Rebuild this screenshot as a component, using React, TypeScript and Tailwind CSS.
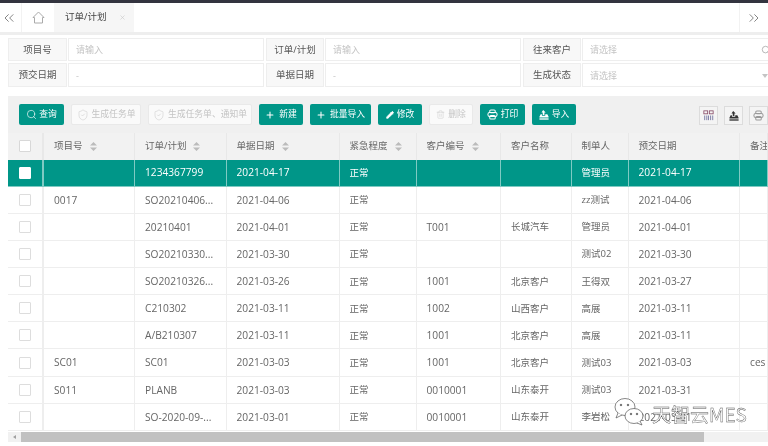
import React from 'react';
import { ChevronsLeft, ChevronsRight, Plus, Search, ShieldCheck, Pencil, Trash2, X } from 'lucide-react';

const font = '[font-family:"Open_Sans","Noto_Sans_CJK_SC",sans-serif]';

const columns = [
  { title: '项目号', sort: true },
  { title: '订单/计划', sort: true },
  { title: '单据日期', sort: true },
  { title: '紧急程度', sort: true },
  { title: '客户编号', sort: true },
  { title: '客户名称', sort: false },
  { title: '制单人', sort: false },
  { title: '预交日期', sort: false },
  { title: '备注', sort: false },
];

const rows = [
  ['', '1234367799', '2021-04-17', '正常', '', '', '管理员', '2021-04-17', ''],
  ['0017', 'SO20210406...', '2021-04-06', '正常', '', '', 'zz测试', '2021-04-06', ''],
  ['', '20210401', '2021-04-01', '正常', 'T001', '长城汽车', '管理员', '2021-04-01', ''],
  ['', 'SO20210330...', '2021-03-30', '正常', '', '', '测试02', '2021-03-30', ''],
  ['', 'SO20210326...', '2021-03-26', '正常', '1001', '北京客户', '王得双', '2021-03-27', ''],
  ['', 'C210302', '2021-03-11', '正常', '1002', '山西客户', '高展', '2021-03-11', ''],
  ['', 'A/B210307', '2021-03-11', '正常', '1001', '北京客户', '高展', '2021-03-11', ''],
  ['SC01', 'SC01', '2021-03-03', '正常', '1001', '北京客户', '测试03', '2021-03-03', 'ces'],
  ['S011', 'PLANB', '2021-03-03', '正常', '0010001', '山东泰开', '测试03', '2021-03-31', ''],
  ['', 'SO-2020-09-...', '2021-03-01', '正常', '0010001', '山东泰开', '李岩松', '2021-03-01', ''],
];

const gridCols = 'grid grid-cols-[36px_91px_91.5px_113px_77px_84.5px_70.5px_57px_111.5px_28px]';

const HomeIcon = () => (
  <svg width="13" height="13" viewBox="0 0 13 13" fill="none" stroke="#aaa" strokeWidth="1">
    <path d="M1 6.5 L6.5 1 L12 6.5 H10.5 V12 H2.5 V6.5 Z" />
  </svg>
);

const SortIcon = () => (
  <svg width="7" height="9" viewBox="0 0 7 9" fill="#bbb" className="ml-[7px] shrink-0">
    <path d="M3.5 0 L7 3.5 H0 Z M0 5.5 H7 L3.5 9 Z" />
  </svg>
);

const ImportIcon = ({ color }: { color: string }) => (
  <svg width="10" height="10" viewBox="0 0 12 12" fill={color}>
    <path d="M5 0 L8 3 H6.5 V6 H4.5 V3 H3 Z" />
    <path d="M2 5 H3.5 V7 H7.5 V5 H10 L11.5 8 V9 H0.5 V8 Z" />
    <rect x="0.5" y="10" width="11" height="1.6" />
  </svg>
);

const PrintIcon = ({ color }: { color: string }) => (
  <svg width="11" height="11" viewBox="0 0 12 12" fill="none" stroke={color} strokeWidth="1.1">
    <rect x="3" y="1" width="6" height="3" rx="1.2" />
    <rect x="1" y="3.8" width="10" height="4.4" rx="2" />
    <rect x="3" y="7" width="6" height="4" rx="1.2" />
  </svg>
);

const ColumnsIcon = () => (
  <svg width="11" height="11" viewBox="0 0 13 13" fill="none" stroke="#8a4f6a" strokeWidth="1">
    <rect x="1" y="1" width="4.5" height="3.5" />
    <rect x="7.5" y="1" width="4.5" height="3.5" />
    <path d="M2 6.5 V12 M4.5 6.5 V12 M6.5 6.5 V12 M9 6.5 V12 M11.5 6.5 V12" stroke="#6b6b9a" />
  </svg>
);

const FilterCell = ({ label, placeholder, labelWidth = 'w-[58px]', width, children }: { label: string; placeholder: string; labelWidth?: string; width: string; children?: React.ReactNode }) => (
  <div className="flex h-full">
    <div className={`${labelWidth} shrink-0 flex items-center justify-center pt-px bg-[#f8f8f8] border border-[#eeeeee] text-[9.5px] text-[#555]`}>
      {label}
    </div>
    <div className={`${width} ml-px flex items-center justify-between pl-[7px] pt-px border border-[#eeeeee] bg-white text-[9px] text-[#c4c4c4]`}>
      <span>{placeholder}</span>
      {children}
    </div>
  </div>
);

const Btn = ({ width, disabled, gap = 'gap-[3px]', icon, children }: { width: string; disabled?: boolean; gap?: string; icon: React.ReactNode; children: string }) => (
  <button
    className={`${width} ${gap} h-[21px] shrink-0 flex items-center justify-center rounded-[2px] text-[8.8px] ${
      disabled ? 'bg-[#fafafa] border border-[#e9e9e9] text-[#c4c4c4]' : 'bg-[#009688] text-white'
    }`}
  >
    {icon}
    {children}
  </button>
);

const IconBtn = ({ children }: { children: React.ReactNode }) => (
  <div className="w-[19px] h-[19px] shrink-0 flex items-center justify-center bg-[#f4f4f4] border border-[#dcdcdc]">
    {children}
  </div>
);

export default function App() {
  return (
    <div className={`${font} relative w-[768px] h-[446px] overflow-hidden bg-white blur-[0.35px]`}>
      <div className="h-[3px] bg-[#33343f]" />

      {/* tab bar */}
      <div className="h-[29px] flex bg-white">
        <div className="w-[22px] pr-[4px] flex items-center justify-center border-r border-[#f2f2f2]">
          <ChevronsLeft size={16} strokeWidth={1.2} color="#666" />
        </div>
        <div className="w-[32px] flex items-center justify-center">
          <HomeIcon />
        </div>
        <div className="w-[80px] flex items-center pl-[11px] bg-[#f6f6f6] text-[9.5px] text-[#444]">
          订单/计划
          <X size={7} color="#c8c8c8" className="ml-[13px]" />
        </div>
        <div className="ml-auto w-[28px] mr-px flex items-center justify-center border-l border-[#f2f2f2]">
          <ChevronsRight size={16} strokeWidth={1.2} color="#666" />
        </div>
      </div>
      <div className="h-[3px] bg-[#eeeeee]" />

      {/* filters */}
      <div className="pl-[8px] pt-[3px] h-[58px] flex flex-col gap-[2px]">
        <div className="h-[23px] flex gap-[2px]">
          <FilterCell label="项目号" placeholder="请输入" labelWidth="w-[59px]" width="w-[196px]" />
          <FilterCell label="订单/计划" placeholder="请输入" width="w-[196px]" />
          <FilterCell label="往来客户" placeholder="请选择" width="w-[188px]">
            <Search size={10} strokeWidth={1.4} color="#888" className="mr-[-2px]" />
          </FilterCell>
        </div>
        <div className="h-[24px] flex gap-[2px]">
          <FilterCell label="预交日期" placeholder="-" labelWidth="w-[59px]" width="w-[196px]" />
          <FilterCell label="单据日期" placeholder="-" width="w-[196px]" />
          <FilterCell label="生成状态" placeholder="请选择" width="w-[188px]">
            <div className="mr-[1px] w-0 h-0 border-x-[3px] border-x-transparent border-t-[4px] border-t-[#c4c4c4]" />
          </FilterCell>
        </div>
      </div>

      {/* toolbar + table */}
      <div className="ml-[8px] mt-[3px]">
        <div className="h-[37px] pl-[11px] pt-[8px] flex gap-[7px] bg-[#f0f0f0]">
          <Btn width="w-[45px]" gap="gap-[2px]" icon={<Search size={11} strokeWidth={1.4} />}>查询</Btn>
          <Btn width="w-[70px]" disabled icon={<ShieldCheck size={12} strokeWidth={1} />}>生成任务单</Btn>
          <Btn width="w-[104px]" disabled icon={<ShieldCheck size={12} strokeWidth={1} />}>生成任务单、通知单</Btn>
          <Btn width="w-[44px]" gap="gap-[4px]" icon={<Plus size={10} strokeWidth={2.5} />}>新建</Btn>
          <Btn width="w-[61px]" gap="gap-[4px]" icon={<Plus size={10} strokeWidth={2.5} />}>批量导入</Btn>
          <Btn width="w-[44px]" icon={<Pencil size={8} strokeWidth={3} fill="white" />}>修改</Btn>
          <Btn width="w-[44px]" disabled icon={<Trash2 size={9} strokeWidth={1.2} />}>删除</Btn>
          <Btn width="w-[45px]" icon={<PrintIcon color="white" />}>打印</Btn>
          <Btn width="w-[44px]" icon={<ImportIcon color="white" />}>导入</Btn>
          <div className="ml-[116px] mt-[2px] flex gap-[6px]">
            <IconBtn><ColumnsIcon /></IconBtn>
            <IconBtn><ImportIcon color="#333" /></IconBtn>
            <IconBtn><PrintIcon color="#999" /></IconBtn>
          </div>
        </div>

        <div className={`${gridCols} h-[26.5px] bg-[#f2f2f2] text-[9.5px] text-[#666]`}>
          <div className="flex items-center justify-center border-r-2 border-[#e8e8e8]">
            <div className="w-[12px] h-[12px] bg-white border border-[#d8d8d8] rounded-[1px]" />
          </div>
          {columns.map((col) => (
            <div key={col.title} className="flex items-center pl-[10px] border-r border-[#e8e8e8] whitespace-nowrap overflow-hidden">
              {col.title}
              {col.sort && <SortIcon />}
            </div>
          ))}
        </div>

        {rows.map((row, i) => {
          const selected = i === 0;
          return (
            <div
              key={i}
              className={`${gridCols} h-[27.15px] text-[10.2px] border-b ${
                selected ? 'bg-[#009688] text-white border-[#7fcac3]' : 'bg-white text-[#666] border-[#eeeeee]'
              }`}
            >
              <div className={`flex items-center justify-center border-r-2 ${selected ? 'border-[#7fcac3]' : 'border-[#eeeeee]'}`}>
                <div className={`w-[12px] h-[12px] bg-white border rounded-[1px] ${selected ? 'border-white' : 'border-[#dddddd]'}`} />
              </div>
              {row.map((val, j) => (
                <div
                  key={j}
                  className={`flex items-center pl-[10px] pt-px border-r whitespace-nowrap overflow-hidden ${
                    selected ? 'border-[#7fcac3]' : 'border-[#eeeeee]'
                  } ${j === 3 || j === 5 || j === 6 ? 'text-[9.5px]' : ''}`}
                >
                  {val}
                </div>
              ))}
            </div>
          );
        })}

        {/* horizontal scrollbar */}
        <div className="mt-[1px] h-[10px] flex items-center bg-[#f1f1f1]">
          <div className="w-[13px] flex justify-center">
            <div className="w-0 h-0 border-y-[2.5px] border-y-transparent border-r-[3px] border-r-[#a0a0a0]" />
          </div>
          <div className="w-[683px] h-full bg-[#c1c1c1]" />
        </div>
      </div>

      {/* watermark */}
      <div className="absolute left-[613px] top-[397px] flex items-center gap-[3px]">
        <svg width="36" height="32" viewBox="0 0 36 32" fill="white" stroke="#555" strokeWidth="0.7">
          <ellipse cx="12" cy="10" rx="10" ry="8.5" />
          <path d="M5 16 L3 21 L9 18" />
          <circle cx="8" cy="8" r="0.8" fill="#555" />
          <circle cx="15" cy="8" r="0.8" fill="#555" />
          <ellipse cx="21" cy="19" rx="9" ry="7.5" />
          <path d="M27 24 L29 28 L24 26" />
          <circle cx="18" cy="17" r="0.8" fill="#555" />
          <circle cx="24" cy="17" r="0.8" fill="#555" />
        </svg>
        <span className="text-[19px] leading-none text-white whitespace-nowrap [-webkit-text-stroke:0.4px_#555] [font-family:'Noto_Sans_CJK_SC',sans-serif]">
          天智云MES
        </span>
      </div>
    </div>
  );
}
